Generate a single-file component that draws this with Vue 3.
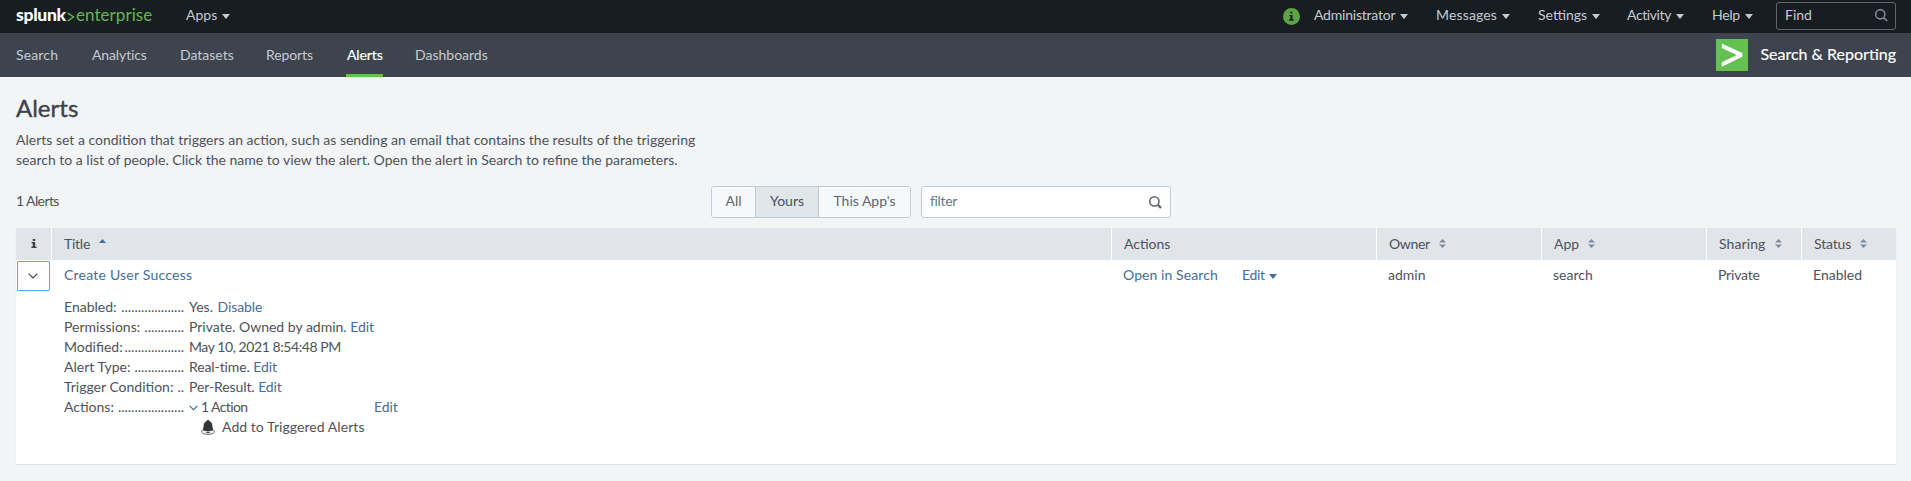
<script setup>
import { ref } from 'vue'

const menus = ['Administrator', 'Messages', 'Settings', 'Activity', 'Help']
const tabs = ['Search', 'Analytics', 'Datasets', 'Reports', 'Alerts', 'Dashboards']
const scopes = ['All', 'Yours', "This App's"]
const columns = ['Owner', 'App', 'Sharing', 'Status']
const details = [
  { label: 'Enabled:', dots: 19, value: 'Yes.', link: 'Disable' },
  { label: 'Permissions:', dots: 12, value: 'Private. Owned by admin.', link: 'Edit' },
  { label: 'Modified:', dots: 18, value: 'May 10, 2021 8:54:48 PM' },
  { label: 'Alert Type:', dots: 15, value: 'Real-time.', link: 'Edit' },
  { label: 'Trigger Condition:', dots: 2, value: 'Per-Result.', link: 'Edit' }
]
const slug = (s) => s.toLowerCase().replace(/[^a-z]+/g, '-')
const filter = ref('')
const scope = ref('Yours')
</script>

<template>
  <div class="page">
    <header class="topbar">
      <div class="brand"><b>splunk</b><svg class="chev" viewBox="0 0 8 10"><path d="M.7 1.2 6.6 5 .7 8.8" /></svg><span>enterprise</span></div>
      <div class="menu apps"><span class="label">Apps</span><i class="caret"></i></div>
      <svg class="info" viewBox="0 0 17 17">
        <circle cx="8.5" cy="8.5" r="8.5" fill="#5ba344" />
        <path d="M7.3 3.700h2.300v1.900H7.300zM6.400 7h3.200v4.300h1.100v1.400H6.100v-1.400h1.300V8.300h-1z" fill="#171d21" />
      </svg>
      <div v-for="m in menus" :key="m" class="menu" :class="slug(m)">
        <span class="label">{{ m }}</span><i class="caret"></i>
      </div>
      <div class="find">
        <span class="label">Find</span>
        <svg viewBox="0 0 13 13"><circle cx="5.3" cy="5.3" r="4.6" /><path d="m8.600 8.600 3.600 3.400" /></svg>
      </div>
    </header>

    <nav class="appbar">
      <a v-for="t in tabs" :key="t" class="tab" :class="[slug(t), { active: t === 'Alerts' }]">{{ t }}</a>
      <div class="app">
        <svg viewBox="0 0 32 32"><rect width="32" height="32" fill="#65c052" /><path d="M5.800 4.400 26.300 14v3.800L5.800 27.700v-4.400L20.800 16 5.800 8.900z" fill="#fff" /></svg>
        <span>Search &amp; Reporting</span>
      </div>
    </nav>

    <main>
      <h1>Alerts</h1>
      <p class="intro">
        <span>Alerts set a condition that triggers an action, such as sending an email that contains the results of the triggering</span><br>
        <span>search to a list of people. Click the name to view the alert. Open the alert in Search to refine the parameters.</span>
      </p>

      <div class="tools">
        <span class="count">1 Alerts</span>
        <div class="scopes">
          <button v-for="s in scopes" :key="s" :class="[slug(s), { on: s === scope }]" @click="scope = s">{{ s }}</button>
        </div>
        <label class="filter">
          <input v-model="filter" placeholder="filter">
          <svg viewBox="0 0 13 13"><circle cx="5.4" cy="5.4" r="4.6" /><path class="handle" d="m9 9 3 3" /></svg>
        </label>
      </div>

      <section class="table">
        <div class="row head">
          <div class="cell narrow">
            <svg class="i" viewBox="0 0 6 9"><path d="M1.700 0h2.500v1.900H1.700zM.6 3h3.600v4.600h1.300V9H.4V7.600h1.400V4.400H.6z" /></svg>
          </div>
          <div class="cell"><span class="title">Title</span><svg class="up" viewBox="0 0 7 4"><path d="M0 4 3.500 0 7 4z" /></svg></div>
          <div class="cell"><span>Actions</span></div>
          <div v-for="c in columns" :key="c" class="cell" :class="'h-' + slug(c)">
            <span>{{ c }}</span><svg class="sort" viewBox="0 0 7 9"><path d="M0 3.600 3.500 0 7 3.600zM0 5.400 3.500 9 7 5.400z" /></svg>
          </div>
        </div>
        <div class="row body">
          <div class="cell narrow">
            <button class="toggle"><svg viewBox="0 0 10 6"><path d="M.7.7 5 5 9.300.7" /></svg></button>
          </div>
          <div class="cell"><a class="name">Create User Success</a></div>
          <div class="cell links"><a class="open">Open in Search</a><a class="edit">Edit</a><i class="caret"></i></div>
          <div class="cell">admin</div>
          <div class="cell">search</div>
          <div class="cell private">Private</div>
          <div class="cell">Enabled</div>
        </div>

        <dl class="details">
          <div v-for="d in details" :key="d.label" class="line">
            <dt><span>{{ d.label }}</span><span>{{ '.'.repeat(d.dots) }}</span></dt>
            <dd><span :class="'v-' + slug(d.label)">{{ d.value }}</span> <a v-if="d.link">{{ d.link }}</a></dd>
          </div>
          <div class="line">
            <dt><span>Actions:</span><span>{{ '.'.repeat(20) }}</span></dt>
            <dd class="action">
              <svg class="mini" viewBox="0 0 9 6"><path d="M.6.8 4.500 4.700 8.400.8" /></svg>
              <span class="one">1 Action</span>
              <a>Edit</a>
            </dd>
          </div>
          <div class="line triggered">
            <svg viewBox="0 0 14 15">
              <path d="M1 10.200C-.5 12.800 2.700 14.400 7 14.400s7.500-1.600 6-4.200" fill="#eceded" stroke="#5d6166" stroke-width=".9" />
              <path d="M7 0C6 0 5.600.7 5.500 1.300 3.200 2 2.700 4.300 2.600 6.300 2.500 8.300 1.700 9.300 1.500 10.200c2.600 1 8.400 1 11 0-.2-.9-1-1.900-1.100-3.900-.1-2-.6-4.300-2.900-5C8.400.7 8 0 7 0z" fill="#30353b" />
              <ellipse cx="7" cy="12.300" rx="2" ry=".9" fill="#50555b" />
            </svg>
            <span>Add to Triggered Alerts</span>
          </div>
        </dl>
      </section>
    </main>
  </div>
</template>

<style>
body {
  background: #f2f4f5;
}
</style>

<style scoped>
.page {
  height: 481px;
  overflow: hidden;
  background: #f2f4f6;
  color: #4e525a;
  font: 14px/20px Lato, "Open Sans", sans-serif;
  font-kerning: normal;
}
.page * {
  box-sizing: border-box;
}
svg {
  display: block;
  flex: none;
}
a {
  color: #466c99;
}
.caret {
  flex: none;
  border: 4px solid transparent;
  border-top: 5px solid currentColor;
  border-bottom: 0;
}

.topbar {
  display: flex;
  align-items: center;
  height: 33px;
  padding: 0 15px 1px 16px;
  background: #171d21;
  color: #c3cbd4;
}
.label {
  margin-top: -2px;
}
.brand {
  display: flex;
  align-items: center;
  width: 170px;
  margin-top: -2px;
  font-size: 17px;
  color: #65b553;
}
.brand b {
  width: 50px;
  color: #fff;
  font-size: 17.5px;
  font-weight: 900;
  letter-spacing: -0.3px;
}
.brand span {
  letter-spacing: 0.05px;
}
.chev {
  width: 8px;
  height: 10px;
  margin: 4px 1px 0 1px;
  fill: none;
  stroke: #65b553;
  stroke-width: 1.4;
}
.menu {
  display: flex;
  align-items: center;
  flex: none;
}
.menu .caret {
  margin-left: 5px;
}
.apps {
  margin-right: auto;
}
.info {
  width: 17px;
  height: 17px;
  margin-right: 14px;
}
.administrator {
  width: 122px;
  letter-spacing: -0.22px;
}
.messages {
  width: 102px;
  letter-spacing: 0.15px;
}
.settings {
  width: 89px;
}
.activity {
  width: 85px;
  letter-spacing: -0.4px;
}
.help {
  width: 64px;
  letter-spacing: -0.3px;
}
.find {
  display: flex;
  align-items: center;
  justify-content: space-between;
  width: 120px;
  height: 28px;
  padding: 0 7px 1px 8px;
  border: 1px solid #5c6773;
  border-radius: 3px;
}
.find svg {
  width: 13px;
  height: 13px;
  fill: none;
  stroke: #818d99;
  stroke-width: 1.5;
}

.appbar {
  display: flex;
  align-items: center;
  height: 44px;
  padding: 0 15px 0 16px;
  background: #3e444e;
}
.tab {
  display: flex;
  align-items: center;
  height: 44px;
  padding-bottom: 1px;
  margin-right: 33px;
  flex: none;
  color: #c3cbd4;
}
.tab.search {
  width: 43px;
  letter-spacing: 0.15px;
}
.tab.analytics {
  width: 55px;
  letter-spacing: -0.12px;
}
.tab.datasets {
  width: 53px;
}
.tab.reports {
  width: 47px;
  letter-spacing: -0.1px;
}
.tab.alerts {
  width: 37px;
  margin-right: 32px;
}
.tab.active {
  padding: 2px 0 0 1px;
  border-bottom: 3px solid #65c052;
  color: #fff;
  letter-spacing: -0.1px;
  -webkit-text-stroke: 0.2px #fff;
}
.app {
  display: flex;
  align-items: center;
  justify-content: space-between;
  width: 180px;
  margin-left: auto;
  color: #fff;
  font-size: 16px;
  letter-spacing: 0;
  -webkit-text-stroke: 0.15px #fff;
}
.app svg {
  width: 32px;
  height: 32px;
}
.app span {
  margin-top: -2px;
}

main {
  padding: 0 15px 0 16px;
}
h1 {
  margin: 0;
  padding-top: 18px;
  font-size: 24px;
  line-height: 26px;
  font-weight: 400;
  letter-spacing: 0;
  color: #3c444d;
  -webkit-text-stroke: 0.4px #3c444d;
}
.intro {
  margin: 9px 0 0;
  white-space: nowrap;
}
.tools {
  display: flex;
  align-items: center;
  height: 32px;
  margin-top: 16px;
}
.count {
  width: 695px;
  margin-top: -2px;
  letter-spacing: -0.6px;
}
.scopes {
  display: flex;
  width: 200px;
  height: 32px;
  margin-right: 10px;
  border: 1px solid #c3cbd4;
  border-radius: 3px;
  overflow: hidden;
}
.scopes button {
  flex: none;
  padding: 0 0 2px;
  border: 0;
  background: #f7f8fa;
  color: #5c6773;
  font: inherit;
}
.scopes .all {
  width: 43px;
}
.scopes .yours {
  width: 64px;
  border-left: 1px solid #c3cbd4;
  border-right: 1px solid #c3cbd4;
}
.scopes .on {
  background: #e1e6eb;
  color: #4a515b;
}
.scopes .this-app-s {
  width: 91px;
}
.filter {
  display: flex;
  align-items: center;
  width: 250px;
  height: 32px;
  padding: 0 8px 0 8px;
  border: 1px solid #c3cbd4;
  border-radius: 3px;
  background: #fff;
}
.filter input {
  flex: 1;
  min-width: 0;
  padding: 0 0 2px;
  border: 0;
  outline: 0;
  background: none;
  font: inherit;
  letter-spacing: -0.35px;
}
.filter input::placeholder {
  color: #6b7785;
}
.filter svg {
  width: 13px;
  height: 13px;
  fill: none;
  stroke: #5c6773;
  stroke-width: 1.6;
}
.filter .handle {
  stroke-width: 2.4;
}

.table {
  height: 236px;
  margin-top: 10px;
  background: #fff;
  box-shadow: 0 1px 1px #dfe3e7;
}
.row {
  display: grid;
  grid-template-columns: 35px 1060px 265px 165px 165px 95px 95px;
}
.cell {
  display: flex;
  align-items: center;
  height: 32px;
  padding: 0 0 2px 12px;
}
.head {
  background: #e1e5ea;
}
.head .cell {
  padding-bottom: 0;
}
.head .cell + .cell {
  border-left: 1px solid #fff;
}
.head span {
  margin-top: -1px;
}
.row .cell.narrow {
  justify-content: center;
  padding: 0;
}
.head .narrow svg {
  margin-top: -1px;
}
.body .cell:nth-child(2) {
  padding-left: 13px;
}
.i {
  width: 6px;
  height: 9px;
  fill: #3c444d;
}
.title {
  letter-spacing: -0.25px;
}
.up {
  width: 7px;
  height: 4px;
  margin: -6px 0 0 9px;
  fill: #3f6fa3;
}
.sort {
  width: 7px;
  height: 9px;
  margin: -1px 0 0 9px;
  fill: #818d99;
}
.h-owner span {
  letter-spacing: -0.35px;
}
.h-sharing span {
  letter-spacing: 0.1px;
}
.h-status span {
  letter-spacing: -0.15px;
}
.toggle {
  display: flex;
  align-items: center;
  justify-content: center;
  width: 33px;
  height: 30px;
  padding: 0;
  border: 1px solid #5aaee8;
  border-radius: 1px;
  background: #fff;
}
.toggle svg {
  width: 10px;
  height: 6px;
  margin: -1px 1px 0 0;
  fill: none;
  stroke: #3c444d;
  stroke-width: 1.2;
}
.name {
  letter-spacing: 0.22px;
}
.open {
  width: 119px;
  letter-spacing: 0.08px;
}
.links .caret {
  margin: 2px 0 0 4px;
  color: #466c99;
}
.edit {
  letter-spacing: -0.3px;
}
.private {
  letter-spacing: -0.2px;
}
.details {
  margin: 5px 0 0;
  padding-left: 48px;
}
.line {
  display: flex;
  height: 20px;
  white-space: nowrap;
}
dt {
  display: flex;
  justify-content: space-between;
  width: 120px;
  flex: none;
}
dd {
  margin: 0 0 0 5px;
}
dd a {
  letter-spacing: -0.1px;
}
.v-enabled- {
  margin-right: 1px;
}
.v-alert-type-,
.v-trigger-condition- {
  letter-spacing: -0.1px;
}
.v-modified- {
  letter-spacing: -0.43px;
}
.action {
  display: flex;
  align-items: center;
}
.mini {
  width: 9px;
  height: 6px;
  margin: 1px 3px 0 0;
  fill: none;
  stroke: #466c99;
  stroke-width: 1.2;
}
.one {
  width: 173px;
  letter-spacing: -0.6px;
}
.triggered {
  align-items: center;
  padding-left: 137px;
}
.triggered svg {
  width: 14px;
  height: 15px;
  margin: 0 7px 0 0;
}
.triggered span {
  letter-spacing: 0.06px;
}
</style>
